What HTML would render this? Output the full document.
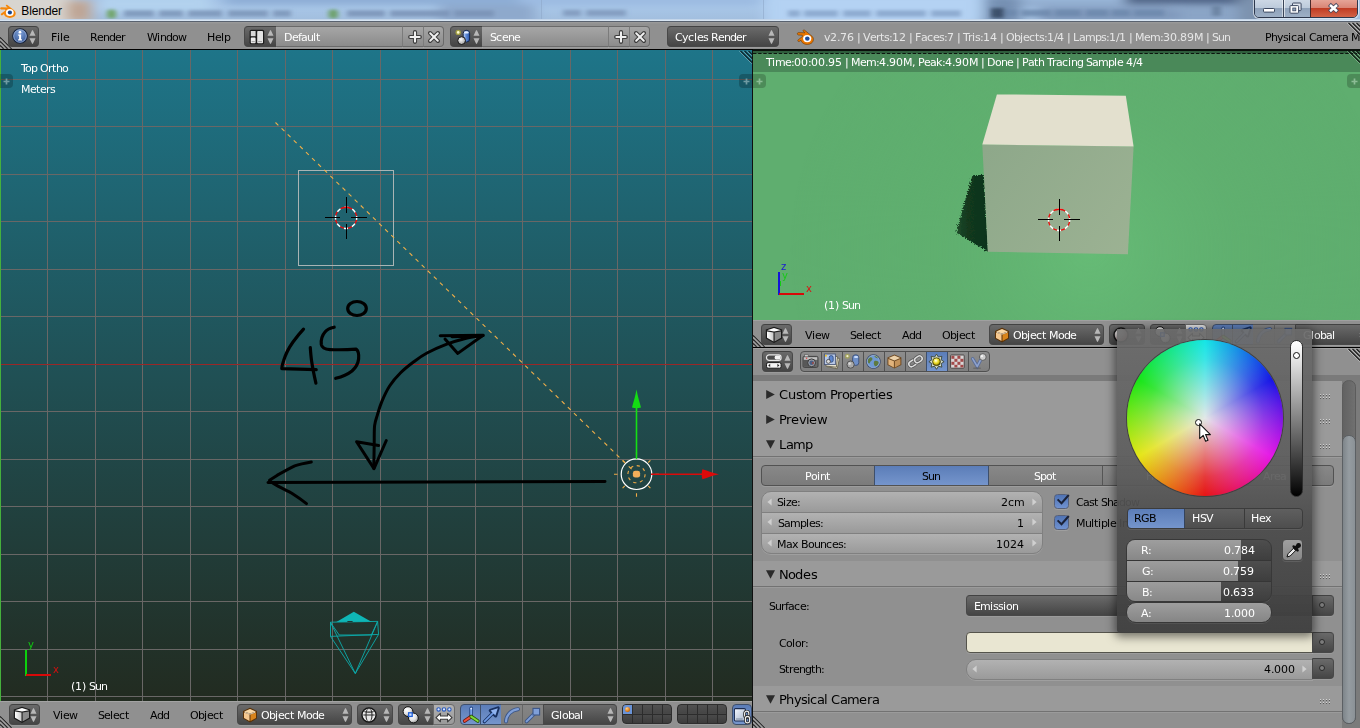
<!DOCTYPE html>
<html lang="en"><head><meta charset="utf-8"><title>Blender</title>
<style>
html,body{margin:0;padding:0;background:#909090;}
body{width:1360px;height:728px;overflow:hidden;position:relative;font-family:"DejaVu Sans","Liberation Sans",sans-serif;font-size:11px;}
#app{position:absolute;left:0;top:0;width:1360px;height:728px;overflow:hidden;}
#app div,#app svg{position:absolute;box-sizing:border-box;}
#app svg{overflow:visible;}
.t{white-space:pre;will-change:transform;}
#app svg.t{overflow:visible;pointer-events:none;}
#app svg text{white-space:pre;}
.clip{overflow:hidden;}

.dk{background:linear-gradient(#6a6a6a,#454545);border:1px solid #484848;border-top-color:#424242;border-radius:4px;box-shadow:0 1px 0 rgba(255,255,255,.1);}
.lt{background:linear-gradient(#a6a6a6,#8b8b8b);border:1px solid #6a6a6a;box-shadow:0 1px 0 rgba(255,255,255,.12);}
.num{background:linear-gradient(#b2b2b2,#9a9a9a);border:1px solid #808080;box-shadow:0 1px 0 rgba(255,255,255,.14);}
.sel{background:linear-gradient(#5b7db8,#7595cc);border:1px solid #3e4f6b;}

</style></head><body><div id="app">
<svg style="left:0px;top:0px;" width="1360" height="20" viewBox="0 0 1360 20"><defs><linearGradient id="tb0" x1="0" y1="0" x2="0" y2="1"><stop offset="0" stop-color="#a3c2e6"/><stop offset=".3" stop-color="#a9c7e8"/><stop offset="1" stop-color="#a2bede"/></linearGradient><filter id="tbb" x="-10%" y="-100%" width="120%" height="300%"><feGaussianBlur stdDeviation="7 3"/></filter><filter id="tbs" x="-10%" y="-100%" width="120%" height="300%"><feGaussianBlur stdDeviation="2.4 1.7"/></filter><clipPath id="tbc"><rect x="0" y="0" width="1360" height="20"/></clipPath></defs><g clip-path="url(#tbc)"><rect x="0" y="0" width="1360" height="20" fill="url(#tb0)"/><g filter="url(#tbb)"><rect x="-20" y="-6" width="92" height="34" fill="#d8d5d0"/><rect x="66" y="0" width="26" height="22" fill="#c4ae9f"/><rect x="70" y="4" width="18" height="14" fill="#bda392"/><rect x="100" y="-4" width="110" height="16" fill="#b2d2ee"/><rect x="225" y="-8" width="300" height="13" fill="#8eaed6"/><rect x="520" y="-6" width="240" height="12" fill="#9dbce2"/><rect x="765" y="-6" width="215" height="34" fill="#b4d2f3"/><rect x="985" y="-4" width="36" height="30" fill="#7690b2"/><rect x="1020" y="-2" width="150" height="10" fill="#93aed0"/><rect x="1125" y="-9" width="135" height="14" fill="#52688a"/><rect x="1180" y="6" width="65" height="18" fill="#8aa4c6"/><rect x="1238" y="-4" width="30" height="30" fill="#7c92ae"/><rect x="440" y="5" width="95" height="18" fill="#8ea9cc"/><rect x="1040" y="8" width="140" height="14" fill="#8099bc"/></g><g filter="url(#tbs)"><path d="M124 13.5H310" stroke="#7a93b6" stroke-width="6.5" stroke-dasharray="30 5 24 5 34 6 40 5 18 60" opacity=".8"/><path d="M347 13.5H518" stroke="#7890b4" stroke-width="6.5" stroke-dasharray="38 5 60 4 40 40" opacity=".8"/><path d="M563 13H637" stroke="#7d97bb" stroke-width="6.5" stroke-dasharray="18 5 40 30" opacity=".8"/><path d="M788 13.5H980" stroke="#86a3c8" stroke-width="6.5" stroke-dasharray="12 4 34 5 28 5 50 5 30 40" opacity=".8"/><path d="M1003 13H1182" stroke="#6c87ac" stroke-width="6.5" stroke-dasharray="14 4 30 4 26 5 22 4 18 4 30 40" opacity=".8"/><rect x="107" y="9.5" width="9" height="9" rx="3" fill="#72a66c"/><rect x="328.5" y="9.5" width="9.5" height="9" rx="3" fill="#6ea26e"/><rect x="991" y="8" width="13" height="10" fill="#34465f" opacity=".85"/><rect x="1212" y="6" width="9" height="10" fill="#5f7696" opacity=".7"/></g><path d="M541.5 0V20M763.5 0V20" stroke="#8fa9ca" stroke-width="1" opacity=".6"/></g></svg>
<div style="left:0px;top:19px;width:1360px;height:2px;background:linear-gradient(#b9cde4,#e2edf8);"></div>
<div style="left:0px;top:21px;width:1360px;height:1px;background:#59626f;"></div>
<div style="left:1254px;top:-4px;width:104px;height:22px;border-radius:5px;border:1px solid #2c374c;background:#8fa2ba;overflow:hidden;box-shadow:0 0 0 1px rgba(255,255,255,.55);"><div style="left:0;top:0;width:28px;height:11px;background:linear-gradient(#d3dde9,#bccadb);"></div><div style="left:0;top:11px;width:28px;height:10px;background:linear-gradient(#8ea1b9,#9fb1c7);"></div><div style="left:28px;top:0;width:27px;height:11px;background:linear-gradient(#d3dde9,#bccadb);"></div><div style="left:28px;top:11px;width:27px;height:10px;background:linear-gradient(#8ea1b9,#9fb1c7);"></div><div style="left:55px;top:0;width:48px;height:11px;background:linear-gradient(#eab0a4,#d98474);"></div><div style="left:55px;top:11px;width:48px;height:10px;background:linear-gradient(#bf3a22,#d4674c);"></div><div style="left:27.5px;top:0;width:1px;height:22px;background:#3a4558;"></div><div style="left:54.5px;top:0;width:1px;height:22px;background:#4a2a2a;"></div><div style="left:28.5px;top:0;width:1px;height:22px;background:rgba(255,255,255,.6);"></div><div style="left:26.5px;top:0;width:1px;height:22px;background:rgba(255,255,255,.5);"></div></div>
<svg style="left:1254px;top:0px;" width="104" height="18" viewBox="0 0 104 18"><rect x="9.5" y="8.5" width="11" height="3.6" rx="0.8" fill="#fff" stroke="#3c4860" stroke-width="1"/><rect x="38.5" y="3" width="8.6" height="7.6" rx="0.8" fill="#dfe5ee" stroke="#3c4860" stroke-width="1"/><rect x="36" y="5.6" width="8.6" height="7.6" rx="0.8" fill="#fff" stroke="#3c4860" stroke-width="1"/><rect x="38.8" y="8" width="3" height="2.8" fill="#8fa2ba" stroke="#3c4860" stroke-width=".8"/><path d="M75.4 4.4L83.6 11.8M83.6 4.4L75.4 11.8" stroke="#4a4a5e" stroke-width="4.2" stroke-linecap="butt"/><path d="M76 5L83 11.2M83 5L76 11.2" stroke="#fff" stroke-width="2.5" stroke-linecap="butt"/></svg>
<svg style="left:0px;top:4px;" width="17" height="14" viewBox="0 0 17 14"><path d="M1 3.2L7.6 3.4L6 2C5.4 1.2 6.4 0.2 7.4 1L14.4 6.6C16.4 8.6 15.8 11.4 13.8 12.8C11.6 14.3 8.2 14.3 6 12.8C4.8 12 4.2 11 4 10L2.4 11.2C1.2 11.8 0.2 10.6 1.2 9.6L5.4 6.6L5 5.6L1.2 5.4C-0.2 5.2 -0.2 3.4 1 3.2Z" fill="#f5870a"/><ellipse cx="9.8" cy="8.6" rx="3.9" ry="3.5" fill="#fff"/><ellipse cx="9.9" cy="8.6" rx="2.1" ry="2" fill="#17468f"/></svg>
<div style="left:21.3px;top:4px;white-space:pre;font-family:'Liberation Sans','DejaVu Sans',sans-serif;font-size:12px;line-height:14px;color:#000;letter-spacing:-0.1px;">Blender</div>
<div style="left:0px;top:22px;width:1360px;height:27px;background:#909090;"></div>
<div style="left:0px;top:49px;width:1360px;height:1px;background:#000;"></div>
<div style="left:0px;top:50px;width:752px;height:651px;background:linear-gradient(#1e7589,#222b20);"></div>
<div style="left:0px;top:701px;width:752px;height:27px;background:#909090;"></div>
<div style="left:752px;top:50px;width:1px;height:678px;background:#101010;"></div>
<div style="left:753px;top:50px;width:607px;height:270px;background:#5fae6f;"></div>
<div style="left:753px;top:53px;width:607px;height:19px;background:#4a8858;"></div>
<div style="left:753px;top:320px;width:607px;height:27px;background:#909090;"></div>
<div style="left:753px;top:347px;width:607px;height:1px;background:#000;"></div>
<div style="left:753px;top:348px;width:607px;height:27px;background:#909090;"></div>
<div style="left:753px;top:375px;width:607px;height:6px;background:#7a7a7a;"></div>
<div style="left:753px;top:381px;width:607px;height:347px;background:#999;"></div>
<svg style="left:0;top:0" width="752" height="701" viewBox="0 0 752 701"><defs><clipPath id="lv"><rect x="0" y="50" width="752" height="651"/></clipPath></defs><g clip-path="url(#lv)"><path d="M47.5 50V701 M95.5 50V701 M142.5 50V701 M190.5 50V701 M237.5 50V701 M285.5 50V701 M332.5 50V701 M380.5 50V701 M427.5 50V701 M475.5 50V701 M522.5 50V701 M570.5 50V701 M617.5 50V701 M665.5 50V701 M712.5 50V701 M0 79.5H752 M0 126.5H752 M0 174.5H752 M0 221.5H752 M0 269.5H752 M0 316.5H752 M0 411.5H752 M0 459.5H752 M0 506.5H752 M0 554.5H752 M0 601.5H752 M0 649.5H752 M0 696.5H752" stroke="#696766" stroke-width="1" fill="none" shape-rendering="crispEdges"/><path d="M0 364.5H752" stroke="#9a2727" stroke-width="1" shape-rendering="crispEdges"/><path d="M0.5 50V701" stroke="#45b03c" stroke-width="1" shape-rendering="crispEdges"/><rect x="298.5" y="170.5" width="95" height="95" fill="none" stroke="#a9b4b4" stroke-width="1" shape-rendering="crispEdges"/><path d="M275.5 122.5L636.5 474" stroke="#f0ae48" stroke-width="1.1" stroke-dasharray="4 4.5" fill="none"/><circle cx="346.1" cy="217.8" r="10.6" fill="none" stroke="#f40808" stroke-width="1.3" stroke-dasharray="4.163 4.163" stroke-dashoffset="6.244"/><circle cx="346.1" cy="217.8" r="10.6" fill="none" stroke="#fff" stroke-width="1.45" stroke-dasharray="4.163 4.163" stroke-dashoffset="2.081"/><path d="M349.73 207.84A10.6 10.6 0 0 0 342.47 207.84" fill="none" stroke="#f40808" stroke-width="1.5"/><path d="M325.0 217.5H340.0M351.0 217.5H367.0M346.5 197.0V213.0M346.5 224.0V239.0" stroke="#000" stroke-width="1" shape-rendering="crispEdges"/><path d="M303.5 329.2C300 333 296 338 293 342C288 349 285 356 283.5 361C282.5 364 281.8 367 281.8 368.6L316.2 369.6" stroke="#000" stroke-width="3.2" fill="none" stroke-linecap="round" stroke-linejoin="round"/><path d="M310.3 347.7C310.6 352 311 357 311.6 361C312.6 368 314.5 377 315.9 383.1" stroke="#000" stroke-width="3.2" fill="none" stroke-linecap="round" stroke-linejoin="round"/><path d="M334.2 327.2C330 328 327 329.5 325 332C322 335.5 320.8 340 321.3 344.5C322 348 325 349.3 330 349.6C340 350 350 349.6 356.3 349.2C358.5 351 359 355 358.6 359C358 364 355.5 368 352 371C347 375 341 377 335.7 378.3" stroke="#000" stroke-width="3.2" fill="none" stroke-linecap="round" stroke-linejoin="round"/><ellipse cx="357" cy="308.5" rx="9.3" ry="7" stroke="#000" stroke-width="3.2" fill="none"/><path d="M483.1 335.4C480.0 335.9 470.4 337.2 464.4 338.7C458.3 340.2 453.0 341.8 446.8 344.2C440.6 346.6 432.5 350.1 427.0 353.0C421.5 355.9 418.2 358.5 413.8 361.8C409.4 365.1 404.6 368.8 400.6 372.8C396.6 376.8 392.7 381.2 389.6 386.0C386.5 390.8 383.9 396.6 381.9 401.4C379.9 406.2 378.7 410.6 377.5 414.6C376.3 418.6 375.2 420.8 374.6 425.6C374.1 430.4 374.3 436.1 374.2 443.2C374.1 450.3 373.9 464.2 373.8 468.4" stroke="#000" stroke-width="3" fill="none" stroke-linecap="round" stroke-linejoin="round"/><path d="M440.2 335.8L483.1 335.2L457.8 353.4L445 339" stroke="#000" stroke-width="3" fill="none" stroke-linecap="round" stroke-linejoin="round"/><path d="M452 336.8L481 335.9" stroke="#000" stroke-width="3" fill="none" stroke-linecap="round" stroke-linejoin="round"/><path d="M356.6 441.8L378.6 445.4M386.3 440.5L374 468.6L356.6 441.8" stroke="#000" stroke-width="3" fill="none" stroke-linecap="round" stroke-linejoin="round"/><path d="M268 482.5L605 481.6" stroke="#000" stroke-width="3" fill="none" stroke-linecap="round" stroke-linejoin="round"/><path d="M311.3 461.9C305 463 300 464 294.7 465.8C288 469 282 472.5 277 475.4L269.5 480.2" stroke="#000" stroke-width="3" fill="none" stroke-linecap="round" stroke-linejoin="round"/><path d="M270.4 481.4C273 483.5 276 485 278.5 486.4C283 489 288 491 291.8 493.2C297 496.5 302 500 306.5 503.6" stroke="#000" stroke-width="3" fill="none" stroke-linecap="round" stroke-linejoin="round"/><circle cx="636.5" cy="474.2" r="15.3" fill="none" stroke="#fff" stroke-width="1.2"/><circle cx="636.5" cy="474.2" r="8.6" fill="none" stroke="#f0aa46" stroke-width="1.1" stroke-dasharray="3.2 3.55"/><rect x="632.9" y="470.8" width="7.2" height="6.8" rx="2.4" fill="#f2ae5a"/><path d="M655.5 474.2L659.0 474.2 M648.2 485.9L650.4 488.1 M636.5 493.2L636.5 496.7 M624.8 485.9L622.6 488.1 M617.5 474.2L614.0 474.2 M624.8 462.5L622.6 460.3 M636.5 455.2L636.5 451.7 M648.2 462.5L650.4 460.3" stroke="#f0aa46" stroke-width="1.1" fill="none"/><path d="M636.5 459V406" stroke="#14e014" stroke-width="1.6" fill="none"/><path d="M636.5 389.5C637.6 396 639.6 402 641 407.6C638 408.6 635 408.6 632 407.6C633.4 402 635.4 396 636.5 389.5Z" fill="#14dc14"/><path d="M651 474.3H704" stroke="#dc0a0a" stroke-width="1.6" fill="none"/><path d="M719 474.3C713 473.2 708 470.8 702.4 469.3C701.4 472.5 701.4 476 702.4 479.3C708 477.8 713 475.4 719 474.3Z" fill="#dc0a0a"/><path d="M353.8 611.8L371.8 622H336.4Z" fill="#0fb6b6"/><path d="M330.5 622.2L377.6 621.4L378.6 634.4L330.5 636.4ZM339.2 635H371.3M330.5 622.5L355.3 673.5L377.6 621.6M330.5 636.4L355.3 673.5L378.6 634.4M371.3 635L377.6 621.6M339.2 635L330.5 622.5" stroke="#0cabab" stroke-width="0.9" fill="none"/><path d="M347.4 621.5H352.6" stroke="#1c3a35" stroke-width="1"/><path d="M26 650V676" stroke="#0cd00c" stroke-width="2" shape-rendering="crispEdges"/><path d="M26 675H51.2" stroke="#d80808" stroke-width="2" shape-rendering="crispEdges"/></g></svg>
<svg class="t" style="left:18px;top:60px" width="55" height="16"><text x="3 7 13 19 22 30 34 38 44" y="12" font-size="11" fill="#fff">Top Ortho</text></svg>
<svg class="t" style="left:18px;top:81px" width="42" height="16"><text x="3 12 18 22 28 32" y="12" font-size="11" fill="#fff">Meters</text></svg>
<svg class="t" style="left:68px;top:678px" width="44" height="16"><text x="3 7 14 18 21 27 33" y="12" font-size="11" fill="#fff">(1) Sun</text></svg>
<svg class="t" style="left:25px;top:638px" width="13" height="15"><text x="3" y="10" font-size="10" fill="#10c810">y</text></svg>
<svg class="t" style="left:50px;top:663px" width="13" height="15"><text x="3" y="10" font-size="10" fill="#d01010">x</text></svg>
<div style="left:0px;top:22px;width:1360px;height:2px;background:linear-gradient(#9c9c9c,#909090);"></div>
<svg style="left:0px;top:37px;" width="12" height="12" viewBox="0 0 12 12"><path d="M0 0.5L11.5 12M0 4.5L7.5 12M0 8.5L3.5 12" stroke="#1a1a1a" stroke-width="1.15"/><path d="M0.2 1.7L10.3 11.8M0.2 5.7L6.3 11.8M0.2 9.7L2.3 11.8" stroke="#dcdcdc" stroke-width="0.8" opacity=".75"/></svg>
<div class="dk" style="left:8px;top:26px;width:31px;height:21px;border-radius:4px;"></div>
<svg style="left:12px;top:28px;" width="16" height="16" viewBox="0 0 16 16"><defs><radialGradient id="gi" cx="50%" cy="30%" r="75%"><stop offset="0" stop-color="#7da0d8"/><stop offset="1" stop-color="#2d4f8f"/></radialGradient></defs><circle cx="8" cy="8" r="7.3" fill="url(#gi)" stroke="#16233d" stroke-width="1.1"/><circle cx="8" cy="8" r="6.3" fill="none" stroke="#c7d6ee" stroke-width="0.7" opacity=".8"/><circle cx="8" cy="4.2" r="1.35" fill="#fff"/><path d="M6.2 6.6H9.1V11.2H10V12.4H6.1V11.2H7.1V7.8H6.2Z" fill="#fff"/></svg>
<svg style="left:28.9px;top:29.5px;" width="7" height="14" viewBox="0 0 7 14"><path d="M3.1 0.2H3.9L6.5 5.7H0.5ZM3.1 13.8H3.9L6.5 8.3H0.5Z" fill="#b8b8b8"/></svg>
<svg class="t" style="left:48px;top:29px" width="26" height="16"><text x="3 9 12 15" y="12" font-size="11" fill="#000">File</text></svg>
<svg class="t" style="left:87px;top:29px" width="43" height="16"><text x="3 10 16 22 28 34" y="12" font-size="11" fill="#000">Render</text></svg>
<svg class="t" style="left:144px;top:29px" width="48" height="16"><text x="3 13 16 22 28 34" y="12" font-size="11" fill="#000">Window</text></svg>
<svg class="t" style="left:204px;top:29px" width="31" height="16"><text x="3 11 17 20" y="12" font-size="11" fill="#000">Help</text></svg>
<div class="dk" style="left:244px;top:26px;width:33px;height:21px;border-radius:4px 0 0 4px;"></div>
<svg style="left:249px;top:28.5px;" width="16" height="16" viewBox="0 0 16 16"><rect x="0.6" y="0.8" width="14.6" height="14.4" rx="1.6" fill="#1c1c1c"/><rect x="1.8" y="2" width="4.8" height="5.2" fill="#d8d8d8"/><rect x="1.8" y="8.6" width="4.8" height="5.6" rx="0.8" fill="#ededed"/><rect x="8.2" y="2" width="5.8" height="12.2" rx="0.8" fill="#e4e4e4"/><path d="M2.6 12.6H5.8M9.2 12.6H13" stroke="#8a8a8a" stroke-width="0.8"/></svg>
<svg style="left:267.0px;top:29.5px;" width="7" height="14" viewBox="0 0 7 14"><path d="M3.1 0.2H3.9L6.5 5.7H0.5ZM3.1 13.8H3.9L6.5 8.3H0.5Z" fill="#b8b8b8"/></svg>
<div class="lt" style="left:276px;top:26px;width:127px;height:21px;border-radius:0;border-left:0;"></div>
<svg class="t" style="left:281px;top:29px" width="44" height="16"><text x="3 11 17 20 26 32 35" y="12" font-size="11" fill="#fff">Default</text></svg>
<div class="lt" style="left:402px;top:26px;width:22px;height:21px;border-radius:0;border-left-color:#7b7b7b;"></div>
<div class="lt" style="left:423px;top:26px;width:21px;height:21px;border-radius:0 4px 4px 0;border-left-color:#7b7b7b;"></div>
<svg style="left:407.5px;top:29.5px;" width="14" height="14" viewBox="0 0 14 14"><path d="M7 2.2V11.8M2.2 7H11.8" stroke="#3c3c3c" stroke-width="4.2" stroke-linecap="round"/><path d="M7 2.4V11.6M2.4 7H11.6" stroke="#f0f0f0" stroke-width="2.1" stroke-linecap="round"/></svg>
<svg style="left:426.5px;top:29.5px;" width="14" height="14" viewBox="0 0 14 14"><path d="M3 3L11 11M11 3L3 11" stroke="#3c3c3c" stroke-width="4" stroke-linecap="round"/><path d="M3.2 3.2L10.8 10.8M10.8 3.2L3.2 10.8" stroke="#f0f0f0" stroke-width="2" stroke-linecap="round"/></svg>
<div class="dk" style="left:450px;top:26px;width:33px;height:21px;border-radius:4px 0 0 4px;"></div>
<svg style="left:455px;top:28.5px;" width="16" height="16" viewBox="0 0 16 16"><defs><radialGradient id="gs" cx="40%" cy="35%" r="70%"><stop offset="0" stop-color="#fff"/><stop offset="1" stop-color="#9a9a9a"/></radialGradient><linearGradient id="gc" x1="0" x2="1"><stop offset="0" stop-color="#cfe0ff"/><stop offset=".45" stop-color="#5d8ad8"/><stop offset="1" stop-color="#2c57a8"/></linearGradient></defs><circle cx="3.2" cy="3.4" r="2.7" fill="#b8b43a" opacity=".75"/><circle cx="3.2" cy="3.4" r="1.3" fill="#fffbd0"/><rect x="8.2" y="1.4" width="6.4" height="11.6" rx="3" fill="url(#gc)" stroke="#14284f" stroke-width="1"/><ellipse cx="11.4" cy="3.4" rx="2.4" ry="1.2" fill="#e4eeff"/><circle cx="6.6" cy="11.6" r="3.9" fill="url(#gs)" stroke="#141414" stroke-width="1"/></svg>
<svg style="left:473.0px;top:29.5px;" width="7" height="14" viewBox="0 0 7 14"><path d="M3.1 0.2H3.9L6.5 5.7H0.5ZM3.1 13.8H3.9L6.5 8.3H0.5Z" fill="#b8b8b8"/></svg>
<div class="lt" style="left:482px;top:26px;width:127px;height:21px;border-radius:0;border-left:0;"></div>
<svg class="t" style="left:487px;top:29px" width="38" height="16"><text x="3 9 15 21 27" y="12" font-size="11" fill="#fff">Scene</text></svg>
<div class="lt" style="left:608px;top:26px;width:22px;height:21px;border-radius:0;border-left-color:#7b7b7b;"></div>
<div class="lt" style="left:629px;top:26px;width:21px;height:21px;border-radius:0 4px 4px 0;border-left-color:#7b7b7b;"></div>
<svg style="left:613.5px;top:29.5px;" width="14" height="14" viewBox="0 0 14 14"><path d="M7 2.2V11.8M2.2 7H11.8" stroke="#3c3c3c" stroke-width="4.2" stroke-linecap="round"/><path d="M7 2.4V11.6M2.4 7H11.6" stroke="#f0f0f0" stroke-width="2.1" stroke-linecap="round"/></svg>
<svg style="left:632.5px;top:29.5px;" width="14" height="14" viewBox="0 0 14 14"><path d="M3 3L11 11M11 3L3 11" stroke="#3c3c3c" stroke-width="4" stroke-linecap="round"/><path d="M3.2 3.2L10.8 10.8M10.8 3.2L3.2 10.8" stroke="#f0f0f0" stroke-width="2" stroke-linecap="round"/></svg>
<div class="dk" style="left:667px;top:26px;width:112px;height:21px;border-radius:4px;"></div>
<svg class="t" style="left:672px;top:29px" width="79" height="16"><text x="3 10 16 22 25 31 36 39 46 52 58 64 70" y="12" font-size="11" fill="#fff">Cycles Render</text></svg>
<svg style="left:768.0px;top:29.5px;" width="7" height="14" viewBox="0 0 7 14"><path d="M3.1 0.2H3.9L6.5 5.7H0.5ZM3.1 13.8H3.9L6.5 8.3H0.5Z" fill="#b8b8b8"/></svg>
<svg style="left:797px;top:28.5px;" width="18" height="16" viewBox="0 0 18 16"><path d="M1.2 3.6L8 3.8L6.2 2.2C5.6 1.4 6.6 0.4 7.6 1.2L15 7.2C17.2 9.4 16.6 12.6 14.4 14.2C12 15.9 8.4 15.9 6 14.2C4.8 13.3 4.2 12.2 4 11.2L2.4 12.4C1.2 13 0.2 11.8 1.2 10.8L5.6 7.4L5.2 6.2L1.4 6C0 5.8 0 3.8 1.2 3.6Z" fill="#ea7600" stroke="#6b3a05" stroke-width="0.6"/><ellipse cx="10.2" cy="9.6" rx="4.1" ry="3.7" fill="#fff"/><ellipse cx="10.3" cy="9.6" rx="2.3" ry="2.2" fill="#1a4b9b"/></svg>
<svg class="t" style="left:821px;top:29px" width="414" height="16"><text x="3 9 16 19 26 33 36 39 42 49 55 59 63 68 71 78 85 88 91 94 100 106 112 118 123 126 133 136 139 142 147 151 154 159 162 169 176 179 182 185 193 199 202 208 214 218 223 226 233 236 243 246 249 252 258 264 274 280 285 288 295 298 305 308 311 314 323 329 339 342 349 356 359 366 373 382 385 388 391 397 403" y="12" font-size="11" fill="#e6e6e6">v2.76 | Verts:12 | Faces:7 | Tris:14 | Objects:1/4 | Lamps:1/1 | Mem:30.89M | Sun</text></svg>
<svg class="t" style="left:1262px;top:29px" width="103" height="16"><text x="3 9 15 21 26 29 35 41 44 47 54 60 70 76 80 86 89" y="12" font-size="11" fill="#000">Physical Camera M</text></svg>
<svg style="left:1346px;top:22.5px;" width="14" height="14" viewBox="0 0 14 14"><path d="M2.5 0L14 11.5M6.5 0L14 7.5M10.5 0L14 3.5" stroke="#1a1a1a" stroke-width="1.15"/><path d="M1.3 0.2L13.8 12.7M5.3 0.2L13.8 8.7M9.3 0.2L13.8 4.7" stroke="#dcdcdc" stroke-width="0.8" opacity=".75"/></svg>
<div style="left:0px;top:701px;width:752px;height:1px;background:#a3a3a3;"></div>
<div class="clip" style="left:0px;top:701px;width:752px;height:27px;">
<svg style="left:0px;top:15px;" width="12" height="12" viewBox="0 0 12 12"><path d="M0 0.5L11.5 12M0 4.5L7.5 12M0 8.5L3.5 12" stroke="#1a1a1a" stroke-width="1.15"/><path d="M0.2 1.7L10.3 11.8M0.2 5.7L6.3 11.8M0.2 9.7L2.3 11.8" stroke="#dcdcdc" stroke-width="0.8" opacity=".75"/></svg>
<div class="dk" style="left:9px;top:3px;width:31px;height:21px;border-radius:4px;"></div>
<svg style="left:12.5px;top:4.5px;" width="18" height="18" viewBox="0 0 18 18"><defs><linearGradient id="v1" x1="0" x2="1"><stop offset="0" stop-color="#fff"/><stop offset="1" stop-color="#c8c8c8"/></linearGradient></defs><path d="M0.8 3.4L9 0.8L17.2 3.4V12.4L9 17L0.8 12.4Z" fill="#1b1b1b"/><path d="M2 4.3L9 2L16 4.3L9 5.6Z" fill="#fdfdfd"/><path d="M2 5.4L8.5 6.6V15.4L2 11.8Z" fill="url(#v1)"/><path d="M9.6 6.6L16 5.4V11.8L9.6 15.4Z" fill="#8a8a8a"/></svg>
<svg style="left:29.9px;top:6.5px;" width="7" height="14" viewBox="0 0 7 14"><path d="M3.1 0.2H3.9L6.5 5.7H0.5ZM3.1 13.8H3.9L6.5 8.3H0.5Z" fill="#b8b8b8"/></svg>
<svg class="t" style="left:50px;top:6px" width="33" height="16"><text x="3 10 13 19" y="12" font-size="11" fill="#000">View</text></svg>
<svg class="t" style="left:95px;top:6px" width="39" height="16"><text x="3 9 15 18 24 30" y="12" font-size="11" fill="#000">Select</text></svg>
<svg class="t" style="left:147px;top:6px" width="27" height="16"><text x="3 10 16" y="12" font-size="11" fill="#000">Add</text></svg>
<svg class="t" style="left:187px;top:6px" width="41" height="16"><text x="3 11 17 20 26 32" y="12" font-size="11" fill="#000">Object</text></svg>
<div class="dk" style="left:237px;top:3px;width:115px;height:21px;border-radius:4px;"></div>
<svg style="left:242px;top:5.5px;" width="16" height="16" viewBox="0 0 16 16"><path d="M1 4L8 0.8L15 4V11.6L8 15.4L1 11.6Z" fill="#5a3208"/><path d="M2.2 4.4L8 2L13.8 4.4L8 6.6Z" fill="#fbd9a6"/><path d="M2 5.4L7.5 7.5V14L2 11Z" fill="#f6c890"/><path d="M8.5 7.5L14 5.4V11L8.5 14Z" fill="#d8841c"/><path d="M2.6 5.2L8 7.2L13.4 5.2" stroke="#fff3dc" stroke-width="0.8" fill="none"/></svg>
<svg class="t" style="left:258px;top:6px" width="71" height="16"><text x="3 11 17 20 26 32 36 39 48 54 60" y="12" font-size="11" fill="#fff">Object Mode</text></svg>
<svg style="left:341.8px;top:6.5px;" width="7" height="14" viewBox="0 0 7 14"><path d="M3.1 0.2H3.9L6.5 5.7H0.5ZM3.1 13.8H3.9L6.5 8.3H0.5Z" fill="#b8b8b8"/></svg>
<div class="dk" style="left:357px;top:3px;width:36px;height:21px;border-radius:4px;"></div>
<svg style="left:361px;top:5.5px;" width="16" height="16" viewBox="0 0 16 16"><circle cx="8" cy="8" r="7" fill="#e6e6e6" stroke="#151515" stroke-width="1.5"/><ellipse cx="8" cy="8" rx="3" ry="6.6" fill="none" stroke="#2a2a2a" stroke-width="1.1"/><path d="M1.2 8H14.8M2.6 4.2C5 5.4 11 5.4 13.4 4.2" stroke="#2a2a2a" stroke-width="1.1" fill="none"/><circle cx="8" cy="8" r="5.9" fill="none" stroke="#fff" stroke-width="0.7" opacity=".6"/></svg>
<svg style="left:382.8px;top:6.5px;" width="7" height="14" viewBox="0 0 7 14"><path d="M3.1 0.2H3.9L6.5 5.7H0.5ZM3.1 13.8H3.9L6.5 8.3H0.5Z" fill="#b8b8b8"/></svg>
<div class="dk" style="left:398px;top:3px;width:36px;height:21px;border-radius:4px 0 0 4px;"></div>
<svg style="left:401.5px;top:4.5px;" width="18" height="18" viewBox="0 0 18 18"><defs><radialGradient id="pv" cx="38%" cy="32%" r="75%"><stop offset="0" stop-color="#fff"/><stop offset=".55" stop-color="#e2e2e2"/><stop offset="1" stop-color="#8a8a8a"/></radialGradient></defs><circle cx="6" cy="5.6" r="4.9" fill="url(#pv)" stroke="#111" stroke-width="1"/><circle cx="11.4" cy="12" r="4.9" fill="url(#pv)" stroke="#111" stroke-width="1"/><rect x="6.6" y="6.8" width="3.6" height="3.6" fill="#cfe0ff" stroke="#1f5fd8" stroke-width="1.3"/></svg>
<svg style="left:424.0px;top:6.5px;" width="7" height="14" viewBox="0 0 7 14"><path d="M3.1 0.2H3.9L6.5 5.7H0.5ZM3.1 13.8H3.9L6.5 8.3H0.5Z" fill="#b8b8b8"/></svg>
<div class="lt" style="left:433px;top:3px;width:22px;height:21px;border-radius:0 4px 4px 0;background:linear-gradient(#b1b1b1,#999);"></div>
<svg style="left:435px;top:4.5px;" width="18" height="18" viewBox="0 0 18 18"><g fill="#dfe9ff" stroke="#2a5bbd" stroke-width="1.1"><circle cx="3.6" cy="3.4" r="1.7"/><circle cx="9" cy="3.4" r="1.7"/><circle cx="14.4" cy="3.4" r="1.7"/></g><path d="M1 11.6L5.4 7.4V10H12.6V7.4L17 11.6L12.6 15.8V13.2H5.4V15.8Z" fill="#fff" stroke="#3a3a3a" stroke-width="1.1" stroke-linejoin="round"/></svg>
<div class="sel" style="left:460px;top:3px;width:21px;height:21px;border-radius:4px 0 0 4px;"></div>
<div class="sel" style="left:480px;top:3px;width:22px;height:21px;border-radius:0;"></div>
<div style="left:501px;top:3px;width:22px;height:21px;background:linear-gradient(#858585,#7c7c7c);border:1px solid #5a5a5a;border-left:0;"></div>
<div style="left:522px;top:3px;width:22px;height:21px;background:linear-gradient(#858585,#7c7c7c);border:1px solid #5a5a5a;border-left-color:#666;"></div>
<svg style="left:461.5px;top:4.5px;" width="18" height="18" viewBox="0 0 18 18"><path d="M9.2 10.4V2.4" stroke="#1d3c7a" stroke-width="3.6" stroke-linecap="round"/><path d="M9.2 10.4V2.4" stroke="#7aa4ec" stroke-width="2" stroke-linecap="round"/><path d="M9.2 10.6L2.6 15" stroke="#6e1a12" stroke-width="3.6" stroke-linecap="round"/><path d="M9.2 10.6L2.6 15" stroke="#f0503c" stroke-width="2" stroke-linecap="round"/><path d="M9.2 10.6L15.8 15" stroke="#2a5a0c" stroke-width="3.6" stroke-linecap="round"/><path d="M9.2 10.6L15.8 15" stroke="#7fd83a" stroke-width="2" stroke-linecap="round"/><circle cx="9.2" cy="2.6" r="0.9" fill="#e8f0ff"/></svg>
<svg style="left:482px;top:4.5px;" width="18" height="18" viewBox="0 0 18 18"><path d="M2.4 15.6L11 7L8.4 4.6L16 2L13.6 9.8L11.6 7.8" fill="none" stroke="#18305f" stroke-width="3.4" stroke-linejoin="round" stroke-linecap="round"/><path d="M2.6 15.4L11.4 6.6" stroke="#6f9be6" stroke-width="1.8" stroke-linecap="round"/><path d="M8.6 4.6L15.8 2.2L13.4 9.4Z" fill="#8fb3f0"/></svg>
<svg style="left:503px;top:4.5px;" width="18" height="18" viewBox="0 0 18 18"><path d="M3 15.4C3.4 9 8 4 15 3.2" fill="none" stroke="#3d5788" stroke-width="4" stroke-linecap="round"/><path d="M3 15.4C3.4 9 8 4 15 3.2" fill="none" stroke="#7f9fd8" stroke-width="2.2" stroke-linecap="round"/></svg>
<svg style="left:524px;top:4.5px;" width="18" height="18" viewBox="0 0 18 18"><path d="M2.6 15.4L10 8" fill="none" stroke="#3d5788" stroke-width="3.8" stroke-linecap="round"/><path d="M2.6 15.4L10 8" fill="none" stroke="#7f9fd8" stroke-width="2" stroke-linecap="round"/><rect x="9" y="2.4" width="6.6" height="6.6" fill="#7f9fd8" stroke="#3d5788" stroke-width="1.1"/></svg>
<div class="dk" style="left:543px;top:3px;width:74px;height:21px;border-radius:0 4px 4px 0;"></div>
<svg class="t" style="left:548px;top:6px" width="40" height="16"><text x="3 11 14 20 26 32" y="12" font-size="11" fill="#fff">Global</text></svg>
<svg style="left:606.9px;top:6.5px;" width="7" height="14" viewBox="0 0 7 14"><path d="M3.1 0.2H3.9L6.5 5.7H0.5ZM3.1 13.8H3.9L6.5 8.3H0.5Z" fill="#b8b8b8"/></svg>
<div style="left:621.5px;top:3px;width:50px;height:20px;border-radius:4px;background:linear-gradient(#515151,#454545 46%,#4c4c4c 50%,#3c3c3c);border:1px solid #2e2e2e;box-shadow:0 1px 0 rgba(255,255,255,.12);overflow:hidden;"><div style="left:9px;top:0;width:1px;height:20px;background:#2c2c2c"></div><div style="left:19px;top:0;width:1px;height:20px;background:#2c2c2c"></div><div style="left:29px;top:0;width:1px;height:20px;background:#2c2c2c"></div><div style="left:39px;top:0;width:1px;height:20px;background:#2c2c2c"></div><div style="left:0;top:8.5px;width:50px;height:1px;background:#2c2c2c"></div><div style="left:0;top:0;width:9px;height:8.5px;background:#6a93d6"></div><div style="left:2px;top:1.6px;width:5.2px;height:5.2px;border-radius:50%;background:radial-gradient(circle at 35% 30%,#ffd08a,#e07a10 60%,#8a4a08)"></div></div>
<div style="left:676.5px;top:3px;width:50px;height:20px;border-radius:4px;background:linear-gradient(#515151,#454545 46%,#4c4c4c 50%,#3c3c3c);border:1px solid #2e2e2e;box-shadow:0 1px 0 rgba(255,255,255,.12);overflow:hidden;"><div style="left:9px;top:0;width:1px;height:20px;background:#2c2c2c"></div><div style="left:19px;top:0;width:1px;height:20px;background:#2c2c2c"></div><div style="left:29px;top:0;width:1px;height:20px;background:#2c2c2c"></div><div style="left:39px;top:0;width:1px;height:20px;background:#2c2c2c"></div><div style="left:0;top:8.5px;width:50px;height:1px;background:#2c2c2c"></div></div>
<div class="sel" style="left:732px;top:3.3px;width:20px;height:20.5px;border-radius:4px;"></div>
<svg style="left:733.4px;top:5px;" width="19" height="18" viewBox="0 0 19 18"><defs><linearGradient id="lk" x1="0" y1="0" x2="1" y2="1"><stop offset="0" stop-color="#f4f8ff"/><stop offset="1" stop-color="#a8b6cc"/></linearGradient></defs><rect x="1.4" y="2.6" width="11" height="12.4" rx="1" fill="url(#lk)" stroke="#1c2d52" stroke-width="1.1"/><path d="M3 13H9.6" stroke="#6a7890" stroke-width="0.8"/><rect x="11.6" y="5.2" width="4.2" height="6.4" rx="2.1" fill="none" stroke="#1d1d1d" stroke-width="2.6"/><rect x="11.6" y="5.2" width="4.2" height="6.4" rx="2.1" fill="none" stroke="#ececec" stroke-width="1.2"/><rect x="12.4" y="10.4" width="4.2" height="6.4" rx="2.1" fill="none" stroke="#1d1d1d" stroke-width="2.6"/><rect x="12.4" y="10.4" width="4.2" height="6.4" rx="2.1" fill="none" stroke="#ececec" stroke-width="1.2"/></svg>
</div>
<div style="left:753px;top:49px;width:607px;height:2px;background:#0a0f0b;"></div>
<div style="left:753px;top:51px;width:607px;height:2px;background:#2f5d3c;"></div>
<div style="left:753px;top:53px;width:607px;height:1px;background:#417a50;"></div>
<svg style="left:753px;top:53px;" width="607" height="1" viewBox="0 0 607 1"><path d="M0 0.5H607" stroke="#0c140e" stroke-width="1" stroke-dasharray="3.4 1.75"/></svg>
<div style="left:753px;top:54px;width:607px;height:18px;background:#4a8959;"></div>
<svg class="t" style="left:763px;top:54px" width="385" height="16"><text x="3 9 12 22 28 31 38 45 48 55 62 65 72 79 82 85 88 97 103 113 116 123 126 133 140 149 152 155 161 167 173 179 182 189 192 199 206 215 218 221 224 232 238 244 250 253 256 259 265 271 275 281 284 289 293 299 305 308 314 320 323 329 335 345 351 354 360 363 370 373" y="12" font-size="11" fill="#fff">Time:00:00.95 | Mem:4.90M, Peak:4.90M | Done | Path Tracing Sample 4/4</text></svg>
<svg style="left:0;top:0" width="1360" height="320" viewBox="0 0 1360 320"><defs><radialGradient id="gl" cx="1090" cy="250" r="300" gradientUnits="userSpaceOnUse"><stop offset="0" stop-color="#66bb76"/><stop offset="0.5" stop-color="#60b06f" stop-opacity=".6"/><stop offset="1" stop-color="#5fae6f" stop-opacity="0"/></radialGradient><linearGradient id="cf" x1="985" y1="150" x2="1130" y2="255" gradientUnits="userSpaceOnUse"><stop offset="0" stop-color="#8ea88a"/><stop offset="1" stop-color="#9cb293"/></linearGradient><linearGradient id="sh" x1="957" y1="0" x2="988" y2="0" gradientUnits="userSpaceOnUse"><stop offset="0" stop-color="#1e4a2a"/><stop offset=".35" stop-color="#12381e"/><stop offset="1" stop-color="#0f331b"/></linearGradient><filter id="b1" x="-20%" y="-20%" width="140%" height="140%"><feTurbulence type="fractalNoise" baseFrequency="0.85" numOctaves="2" seed="7" result="n"/><feDisplacementMap in="SourceGraphic" in2="n" scale="5" xChannelSelector="R" yChannelSelector="G" result="d"/><feGaussianBlur in="d" stdDeviation="0.55"/></filter><filter id="b2" x="-5%" y="-5%" width="110%" height="110%"><feTurbulence type="fractalNoise" baseFrequency="0.9" numOctaves="1" seed="3" result="n"/><feDisplacementMap in="SourceGraphic" in2="n" scale="1.6" xChannelSelector="R" yChannelSelector="G"/></filter></defs><rect x="753" y="72" width="607" height="248" fill="url(#gl)"/><path d="M972.6 175L984 175L988 251.8L956 232.6Z" fill="url(#sh)" filter="url(#b1)"/><path d="M982.3 144.5L1133.6 146.5L1127.9 254.3L987.8 251.7Z" fill="url(#cf)" filter="url(#b2)"/><path d="M996.9 94.4L1125.8 95.7L1133.6 146.5L982.3 144.5Z" fill="#e3e0ce" filter="url(#b2)"/><circle cx="1059.1" cy="219.8" r="10.6" fill="none" stroke="#f40808" stroke-width="1.3" stroke-dasharray="4.163 4.163" stroke-dashoffset="6.244"/><circle cx="1059.1" cy="219.8" r="10.6" fill="none" stroke="#fff" stroke-width="1.45" stroke-dasharray="4.163 4.163" stroke-dashoffset="2.081"/><path d="M1062.73 209.84A10.6 10.6 0 0 0 1055.47 209.84" fill="none" stroke="#f40808" stroke-width="1.5"/><path d="M1038.0 219.5H1053.0M1064.0 219.5H1080.0M1059.5 199.0V215.0M1059.5 226.0V241.0" stroke="#000" stroke-width="1" shape-rendering="crispEdges"/><path d="M779 272V295" stroke="#1414d8" stroke-width="2" shape-rendering="crispEdges"/><path d="M779 294H804" stroke="#d80808" stroke-width="2" shape-rendering="crispEdges"/><path d="M780.5 281V286" stroke="#10d010" stroke-width="1"/></svg>
<svg class="t" style="left:778px;top:260px" width="13" height="15"><text x="3" y="10" font-size="10" fill="#1a1ad0">z</text></svg>
<svg class="t" style="left:779px;top:269px" width="13" height="15"><text x="3" y="10" font-size="10" fill="#18c818">y</text></svg>
<svg class="t" style="left:803px;top:282px" width="13" height="15"><text x="3" y="10" font-size="10" fill="#d81414">x</text></svg>
<svg class="t" style="left:821px;top:297px" width="44" height="16"><text x="3 7 14 18 21 27 33" y="12" font-size="11" fill="#fff">(1) Sun</text></svg>
<div style="left:753px;top:74px;width:13px;height:14px;background:rgba(0,0,0,.2);border-radius:0 4px 4px 0;"></div>
<svg style="left:756px;top:78px;" width="7" height="7" viewBox="0 0 7 7"><path d="M3.5 0.5V6.5M0.5 3.5H6.5" stroke="#8cbc95" stroke-width="1.7"/></svg>
<div style="left:1347px;top:74px;width:13px;height:14px;background:rgba(0,0,0,.2);border-radius:4px 0 0 4px;"></div>
<svg style="left:1350.5px;top:78px;" width="7" height="7" viewBox="0 0 7 7"><path d="M3.5 0.5V6.5M0.5 3.5H6.5" stroke="#8cbc95" stroke-width="1.7"/></svg>
<div style="left:0px;top:74px;width:13px;height:14px;background:rgba(0,0,0,.22);border-radius:0 4px 4px 0;"></div>
<svg style="left:3px;top:78px;" width="7" height="7" viewBox="0 0 7 7"><path d="M3.5 0.5V6.5M0.5 3.5H6.5" stroke="#6f9ba3" stroke-width="1.7"/></svg>
<div style="left:739px;top:74px;width:13px;height:14px;background:rgba(0,0,0,.22);border-radius:4px 0 0 4px;"></div>
<svg style="left:742.5px;top:78px;" width="7" height="7" viewBox="0 0 7 7"><path d="M3.5 0.5V6.5M0.5 3.5H6.5" stroke="#6f9ba3" stroke-width="1.7"/></svg>
<svg style="left:1346px;top:50.5px;" width="14" height="14" viewBox="0 0 14 14"><path d="M2.5 0L14 11.5M6.5 0L14 7.5M10.5 0L14 3.5" stroke="#0c1a10" stroke-width="1.15"/><path d="M1.3 0.2L13.8 12.7M5.3 0.2L13.8 8.7M9.3 0.2L13.8 4.7" stroke="#9fcfa9" stroke-width="0.8" opacity=".8"/></svg>
<svg style="left:738px;top:50.5px;" width="14" height="14" viewBox="0 0 14 14"><path d="M2.5 0L14 11.5M6.5 0L14 7.5M10.5 0L14 3.5" stroke="#0a2228" stroke-width="1.15"/><path d="M1.3 0.2L13.8 12.7M5.3 0.2L13.8 8.7M9.3 0.2L13.8 4.7" stroke="#8cc4d2" stroke-width="0.8" opacity=".8"/></svg>
<div style="left:753px;top:320px;width:607px;height:1px;background:#a0a0a0;"></div>
<div class="clip" style="left:752px;top:321px;width:608px;height:27px;">
<div class="dk" style="left:9px;top:3px;width:31px;height:21px;border-radius:4px;"></div>
<svg style="left:12.5px;top:4.5px;" width="18" height="18" viewBox="0 0 18 18"><defs><linearGradient id="v1" x1="0" x2="1"><stop offset="0" stop-color="#fff"/><stop offset="1" stop-color="#c8c8c8"/></linearGradient></defs><path d="M0.8 3.4L9 0.8L17.2 3.4V12.4L9 17L0.8 12.4Z" fill="#1b1b1b"/><path d="M2 4.3L9 2L16 4.3L9 5.6Z" fill="#fdfdfd"/><path d="M2 5.4L8.5 6.6V15.4L2 11.8Z" fill="url(#v1)"/><path d="M9.6 6.6L16 5.4V11.8L9.6 15.4Z" fill="#8a8a8a"/></svg>
<svg style="left:29.9px;top:6.5px;" width="7" height="14" viewBox="0 0 7 14"><path d="M3.1 0.2H3.9L6.5 5.7H0.5ZM3.1 13.8H3.9L6.5 8.3H0.5Z" fill="#b8b8b8"/></svg>
<svg class="t" style="left:50px;top:6px" width="33" height="16"><text x="3 10 13 19" y="12" font-size="11" fill="#000">View</text></svg>
<svg class="t" style="left:95px;top:6px" width="39" height="16"><text x="3 9 15 18 24 30" y="12" font-size="11" fill="#000">Select</text></svg>
<svg class="t" style="left:147px;top:6px" width="27" height="16"><text x="3 10 16" y="12" font-size="11" fill="#000">Add</text></svg>
<svg class="t" style="left:187px;top:6px" width="41" height="16"><text x="3 11 17 20 26 32" y="12" font-size="11" fill="#000">Object</text></svg>
<div class="dk" style="left:237px;top:3px;width:115px;height:21px;border-radius:4px;"></div>
<svg style="left:242px;top:5.5px;" width="16" height="16" viewBox="0 0 16 16"><path d="M1 4L8 0.8L15 4V11.6L8 15.4L1 11.6Z" fill="#5a3208"/><path d="M2.2 4.4L8 2L13.8 4.4L8 6.6Z" fill="#fbd9a6"/><path d="M2 5.4L7.5 7.5V14L2 11Z" fill="#f6c890"/><path d="M8.5 7.5L14 5.4V11L8.5 14Z" fill="#d8841c"/><path d="M2.6 5.2L8 7.2L13.4 5.2" stroke="#fff3dc" stroke-width="0.8" fill="none"/></svg>
<svg class="t" style="left:258px;top:6px" width="71" height="16"><text x="3 11 17 20 26 32 36 39 48 54 60" y="12" font-size="11" fill="#fff">Object Mode</text></svg>
<svg style="left:341.8px;top:6.5px;" width="7" height="14" viewBox="0 0 7 14"><path d="M3.1 0.2H3.9L6.5 5.7H0.5ZM3.1 13.8H3.9L6.5 8.3H0.5Z" fill="#b8b8b8"/></svg>
<div class="dk" style="left:357px;top:3px;width:36px;height:21px;border-radius:4px;"></div>
<svg style="left:361px;top:5.5px;" width="16" height="16" viewBox="0 0 16 16"><defs><radialGradient id="sr" cx="30%" cy="30%" r="80%"><stop offset="0" stop-color="#fff"/><stop offset=".45" stop-color="#d8cccc"/><stop offset="1" stop-color="#8a5a5a"/></radialGradient></defs><circle cx="8" cy="8" r="7" fill="url(#sr)" stroke="#151515" stroke-width="1.5"/></svg>
<svg style="left:382.8px;top:6.5px;" width="7" height="14" viewBox="0 0 7 14"><path d="M3.1 0.2H3.9L6.5 5.7H0.5ZM3.1 13.8H3.9L6.5 8.3H0.5Z" fill="#b8b8b8"/></svg>
<div class="dk" style="left:398px;top:3px;width:36px;height:21px;border-radius:4px 0 0 4px;"></div>
<svg style="left:401.5px;top:4.5px;" width="18" height="18" viewBox="0 0 18 18"><defs><radialGradient id="pv" cx="38%" cy="32%" r="75%"><stop offset="0" stop-color="#fff"/><stop offset=".55" stop-color="#e2e2e2"/><stop offset="1" stop-color="#8a8a8a"/></radialGradient></defs><circle cx="6" cy="5.6" r="4.9" fill="url(#pv)" stroke="#111" stroke-width="1"/><circle cx="11.4" cy="12" r="4.9" fill="url(#pv)" stroke="#111" stroke-width="1"/><rect x="6.6" y="6.8" width="3.6" height="3.6" fill="#cfe0ff" stroke="#1f5fd8" stroke-width="1.3"/></svg>
<svg style="left:424.0px;top:6.5px;" width="7" height="14" viewBox="0 0 7 14"><path d="M3.1 0.2H3.9L6.5 5.7H0.5ZM3.1 13.8H3.9L6.5 8.3H0.5Z" fill="#b8b8b8"/></svg>
<div class="lt" style="left:433px;top:3px;width:22px;height:21px;border-radius:0 4px 4px 0;background:linear-gradient(#e2e2e2,#c4c4c4);"></div>
<svg style="left:435px;top:4.5px;" width="18" height="18" viewBox="0 0 18 18"><g fill="#dfe9ff" stroke="#2a5bbd" stroke-width="1.1"><circle cx="3.6" cy="3.4" r="1.7"/><circle cx="9" cy="3.4" r="1.7"/><circle cx="14.4" cy="3.4" r="1.7"/></g><path d="M1 11.6L5.4 7.4V10H12.6V7.4L17 11.6L12.6 15.8V13.2H5.4V15.8Z" fill="#fff" stroke="#3a3a3a" stroke-width="1.1" stroke-linejoin="round"/></svg>
<div class="sel" style="left:460px;top:3px;width:21px;height:21px;border-radius:4px 0 0 4px;"></div>
<div class="sel" style="left:480px;top:3px;width:22px;height:21px;border-radius:0;"></div>
<div style="left:501px;top:3px;width:22px;height:21px;background:linear-gradient(#858585,#7c7c7c);border:1px solid #5a5a5a;border-left:0;"></div>
<div style="left:522px;top:3px;width:22px;height:21px;background:linear-gradient(#858585,#7c7c7c);border:1px solid #5a5a5a;border-left-color:#666;"></div>
<svg style="left:461.5px;top:4.5px;" width="18" height="18" viewBox="0 0 18 18"><path d="M9.2 10.4V2.4" stroke="#1d3c7a" stroke-width="3.6" stroke-linecap="round"/><path d="M9.2 10.4V2.4" stroke="#7aa4ec" stroke-width="2" stroke-linecap="round"/><path d="M9.2 10.6L2.6 15" stroke="#6e1a12" stroke-width="3.6" stroke-linecap="round"/><path d="M9.2 10.6L2.6 15" stroke="#f0503c" stroke-width="2" stroke-linecap="round"/><path d="M9.2 10.6L15.8 15" stroke="#2a5a0c" stroke-width="3.6" stroke-linecap="round"/><path d="M9.2 10.6L15.8 15" stroke="#7fd83a" stroke-width="2" stroke-linecap="round"/><circle cx="9.2" cy="2.6" r="0.9" fill="#e8f0ff"/></svg>
<svg style="left:482px;top:4.5px;" width="18" height="18" viewBox="0 0 18 18"><path d="M2.4 15.6L11 7L8.4 4.6L16 2L13.6 9.8L11.6 7.8" fill="none" stroke="#18305f" stroke-width="3.4" stroke-linejoin="round" stroke-linecap="round"/><path d="M2.6 15.4L11.4 6.6" stroke="#6f9be6" stroke-width="1.8" stroke-linecap="round"/><path d="M8.6 4.6L15.8 2.2L13.4 9.4Z" fill="#8fb3f0"/></svg>
<svg style="left:503px;top:4.5px;" width="18" height="18" viewBox="0 0 18 18"><path d="M3 15.4C3.4 9 8 4 15 3.2" fill="none" stroke="#3d5788" stroke-width="4" stroke-linecap="round"/><path d="M3 15.4C3.4 9 8 4 15 3.2" fill="none" stroke="#7f9fd8" stroke-width="2.2" stroke-linecap="round"/></svg>
<svg style="left:524px;top:4.5px;" width="18" height="18" viewBox="0 0 18 18"><path d="M2.6 15.4L10 8" fill="none" stroke="#3d5788" stroke-width="3.8" stroke-linecap="round"/><path d="M2.6 15.4L10 8" fill="none" stroke="#7f9fd8" stroke-width="2" stroke-linecap="round"/><rect x="9" y="2.4" width="6.6" height="6.6" fill="#7f9fd8" stroke="#3d5788" stroke-width="1.1"/></svg>
<div class="dk" style="left:543px;top:3px;width:74px;height:21px;border-radius:0 4px 4px 0;"></div>
<svg class="t" style="left:548px;top:6px" width="40" height="16"><text x="3 11 14 20 26 32" y="12" font-size="11" fill="#fff">Global</text></svg>
<svg style="left:606.9px;top:6.5px;" width="7" height="14" viewBox="0 0 7 14"><path d="M3.1 0.2H3.9L6.5 5.7H0.5ZM3.1 13.8H3.9L6.5 8.3H0.5Z" fill="#b8b8b8"/></svg>
<div style="left:621.5px;top:3px;width:50px;height:20px;border-radius:4px;background:linear-gradient(#515151,#454545 46%,#4c4c4c 50%,#3c3c3c);border:1px solid #2e2e2e;box-shadow:0 1px 0 rgba(255,255,255,.12);overflow:hidden;"><div style="left:9px;top:0;width:1px;height:20px;background:#2c2c2c"></div><div style="left:19px;top:0;width:1px;height:20px;background:#2c2c2c"></div><div style="left:29px;top:0;width:1px;height:20px;background:#2c2c2c"></div><div style="left:39px;top:0;width:1px;height:20px;background:#2c2c2c"></div><div style="left:0;top:8.5px;width:50px;height:1px;background:#2c2c2c"></div><div style="left:0;top:0;width:9px;height:8.5px;background:#6a93d6"></div><div style="left:2px;top:1.6px;width:5.2px;height:5.2px;border-radius:50%;background:radial-gradient(circle at 35% 30%,#ffd08a,#e07a10 60%,#8a4a08)"></div></div>
<div style="left:676.5px;top:3px;width:50px;height:20px;border-radius:4px;background:linear-gradient(#515151,#454545 46%,#4c4c4c 50%,#3c3c3c);border:1px solid #2e2e2e;box-shadow:0 1px 0 rgba(255,255,255,.12);overflow:hidden;"><div style="left:9px;top:0;width:1px;height:20px;background:#2c2c2c"></div><div style="left:19px;top:0;width:1px;height:20px;background:#2c2c2c"></div><div style="left:29px;top:0;width:1px;height:20px;background:#2c2c2c"></div><div style="left:39px;top:0;width:1px;height:20px;background:#2c2c2c"></div><div style="left:0;top:8.5px;width:50px;height:1px;background:#2c2c2c"></div></div>
<div class="sel" style="left:732px;top:3.3px;width:20px;height:20.5px;border-radius:4px;"></div>
<svg style="left:733.4px;top:5px;" width="19" height="18" viewBox="0 0 19 18"><defs><linearGradient id="lk" x1="0" y1="0" x2="1" y2="1"><stop offset="0" stop-color="#f4f8ff"/><stop offset="1" stop-color="#a8b6cc"/></linearGradient></defs><rect x="1.4" y="2.6" width="11" height="12.4" rx="1" fill="url(#lk)" stroke="#1c2d52" stroke-width="1.1"/><path d="M3 13H9.6" stroke="#6a7890" stroke-width="0.8"/><rect x="11.6" y="5.2" width="4.2" height="6.4" rx="2.1" fill="none" stroke="#1d1d1d" stroke-width="2.6"/><rect x="11.6" y="5.2" width="4.2" height="6.4" rx="2.1" fill="none" stroke="#ececec" stroke-width="1.2"/><rect x="12.4" y="10.4" width="4.2" height="6.4" rx="2.1" fill="none" stroke="#1d1d1d" stroke-width="2.6"/><rect x="12.4" y="10.4" width="4.2" height="6.4" rx="2.1" fill="none" stroke="#ececec" stroke-width="1.2"/></svg>
</div>
<svg style="left:753px;top:335px;" width="12" height="12" viewBox="0 0 12 12"><path d="M0 0.5L11.5 12M0 4.5L7.5 12M0 8.5L3.5 12" stroke="#1a1a1a" stroke-width="1.15"/><path d="M0.2 1.7L10.3 11.8M0.2 5.7L6.3 11.8M0.2 9.7L2.3 11.8" stroke="#dcdcdc" stroke-width="0.8" opacity=".75"/></svg>
<div style="left:753px;top:348px;width:607px;height:1px;background:#a0a0a0;"></div>
<div class="dk" style="left:762px;top:351px;width:31px;height:21px;border-radius:4px;"></div>
<svg style="left:766px;top:354px;" width="17" height="15" viewBox="0 0 17 15"><rect x="0.5" y="0.8" width="14.6" height="5.6" rx="2.6" fill="#4a4a4a" stroke="#e8e8e8" stroke-width="1.2"/><rect x="8.6" y="1.6" width="5.8" height="4" rx="1.8" fill="#f4f4f4"/><rect x="0.5" y="8.6" width="14.6" height="5.6" rx="1.6" fill="#f4f4f4" stroke="#1a1a1a" stroke-width="1"/><path d="M2.2 11.4L4.2 9.8V13ZM13.4 11.4L11.4 9.8V13Z" fill="#222"/></svg>
<svg style="left:783.5px;top:354.5px;" width="7" height="14" viewBox="0 0 7 14"><path d="M3.1 0.2H3.9L6.5 5.7H0.5ZM3.1 13.8H3.9L6.5 8.3H0.5Z" fill="#b8b8b8"/></svg>
<div style="left:800px;top:351px;width:190px;height:21px;border-radius:4px;background:linear-gradient(#8d8d8d,#7f7f7f);border:1px solid #505050;box-shadow:0 1px 0 rgba(255,255,255,.12);overflow:hidden;"><div style="left:20px;top:0;width:1px;height:21px;background:#525252"></div><div style="left:41px;top:0;width:1px;height:21px;background:#525252"></div><div style="left:62px;top:0;width:1px;height:21px;background:#525252"></div><div style="left:83px;top:0;width:1px;height:21px;background:#525252"></div><div style="left:104px;top:0;width:1px;height:21px;background:#525252"></div><div style="left:125px;top:0;width:1px;height:21px;background:#525252"></div><div style="left:146px;top:0;width:1px;height:21px;background:#525252"></div><div style="left:167px;top:0;width:1px;height:21px;background:#525252"></div><div style="left:125px;top:-1px;width:22px;height:21px;background:linear-gradient(#5b7db8,#7595cc);border:1px solid #3e4f6b;"></div></div>
<svg style="left:801.5px;top:352.5px;" width="17" height="17" viewBox="0 0 17 17"><rect x="1" y="3.4" width="15" height="11" rx="1.4" fill="#6a6a6a" stroke="#444" stroke-width="1"/><rect x="1.8" y="4.2" width="13.4" height="2.6" fill="#c4c4c4"/><rect x="2.6" y="1.8" width="3.6" height="2" fill="#d8d8d8" stroke="#555" stroke-width=".6"/><rect x="1.8" y="7" width="5" height="6.6" fill="#585858"/><circle cx="9.6" cy="9.8" r="3.9" fill="#9a9fa8" stroke="#3a3a3a" stroke-width="1"/><circle cx="9.6" cy="9.8" r="2.2" fill="#4a5f86"/><path d="M9.6 9.8L11.6 8.6A2.2 2.2 0 0 1 11 11.6Z" fill="#9a4a44"/><circle cx="4.6" cy="5.2" r="0.8" fill="#e04848"/></svg>
<svg style="left:822.5px;top:352.5px;" width="17" height="17" viewBox="0 0 17 17"><rect x="5" y="4.2" width="10.6" height="10.6" fill="#e8e2c8" stroke="#6a6654" stroke-width=".9" transform="rotate(12 10 9)"/><rect x="3.4" y="3" width="10.6" height="10.6" fill="#efead4" stroke="#6a6654" stroke-width=".9" transform="rotate(6 8 8)"/><rect x="1.4" y="1" width="11" height="10.6" fill="#b9c9e6" stroke="#4a5878" stroke-width=".9"/><rect x="6.2" y="2.6" width="4" height="6.6" rx="1.8" fill="#5d86cf" stroke="#233a66" stroke-width=".7"/><circle cx="5.4" cy="8.4" r="2" fill="#ddd" stroke="#333" stroke-width=".7"/><rect x="2" y="1.8" width="1.8" height="1.8" fill="#f0c020"/></svg>
<svg style="left:843.5px;top:352.5px;" width="17" height="17" viewBox="0 0 17 17"><circle cx="3.4" cy="3.2" r="2.5" fill="#a8a850" opacity=".75"/><circle cx="3.4" cy="3.2" r="1.1" fill="#f4f0d0"/><rect x="8.6" y="1.8" width="6.2" height="10.6" rx="2.8" fill="#6f90c8" stroke="#3a4e78" stroke-width=".9"/><ellipse cx="12.1" cy="4" rx="2.2" ry="1.1" fill="#cfe0ff"/><circle cx="6.6" cy="11.6" r="3.6" fill="#a9a9a9" stroke="#4a4a4a" stroke-width=".9"/><circle cx="5.6" cy="10.6" r="1.3" fill="#e6e6e6" opacity=".8"/></svg>
<svg style="left:864.5px;top:352.5px;" width="17" height="17" viewBox="0 0 17 17"><circle cx="8.4" cy="8.6" r="6.8" fill="#6f99d2" stroke="#36476a" stroke-width="1.1"/><path d="M3.4 5.6C5 3.6 7.6 4.2 7.4 6.2C7.2 7.8 5.4 7.8 5 9.6C4.8 10.8 3.8 11 3 9.6C2.6 8 2.8 6.6 3.4 5.6ZM9.4 8C11 7.2 13.6 7.8 13.8 9.8C13.4 12 11.4 13.8 10 13.2C8.6 12 8.4 9.2 9.4 8ZM9 2.6C10.8 2.2 12.8 3.2 13.6 5C12.2 5.8 10 4.8 9 2.6Z" fill="#5f7a40"/><circle cx="8.4" cy="8.6" r="6.2" fill="none" stroke="#c7dcff" stroke-width=".7" opacity=".7"/></svg>
<svg style="left:885.5px;top:352.5px;" width="17" height="17" viewBox="0 0 17 17"><path d="M1.4 4.6L8.4 1.4L15.4 4.6V12L8.4 15.6L1.4 12Z" fill="#6e4a24"/><path d="M2.6 5L8.4 2.6L14.2 5L8.4 7.4Z" fill="#ecd2aa"/><path d="M2.4 6L7.9 8.2V14.4L2.4 11.6Z" fill="#e2b47c"/><path d="M8.9 8.2L14.4 6V11.6L8.9 14.4Z" fill="#c4935a"/></svg>
<svg style="left:906.5px;top:352.5px;" width="17" height="17" viewBox="0 0 17 17"><g fill="none" stroke-linecap="round"><rect x="1.6" y="7.6" width="8" height="5.4" rx="2.7" transform="rotate(-35 5.6 10.3)" stroke="#5a5a5a" stroke-width="3"/><rect x="1.6" y="7.6" width="8" height="5.4" rx="2.7" transform="rotate(-35 5.6 10.3)" stroke="#dcdcdc" stroke-width="1.5"/><rect x="7.4" y="3.6" width="8" height="5.4" rx="2.7" transform="rotate(-35 11.4 6.3)" stroke="#5a5a5a" stroke-width="3"/><rect x="7.4" y="3.6" width="8" height="5.4" rx="2.7" transform="rotate(-35 11.4 6.3)" stroke="#dcdcdc" stroke-width="1.5"/></g></svg>
<svg style="left:927.5px;top:352.5px;" width="17" height="17" viewBox="0 0 17 17"><defs><radialGradient id="sg" cx="42%" cy="36%" r="62%"><stop offset="0" stop-color="#ffffff"/><stop offset=".3" stop-color="#fcf26a"/><stop offset=".7" stop-color="#d8c410"/><stop offset="1" stop-color="#6a5e08"/></radialGradient></defs><path d="M8.5 1.1L10.4 4.1L13.9 3.3L13.1 6.8L16.1 8.7L13.1 10.6L13.9 14.1L10.4 13.3L8.5 16.3L6.6 13.3L3.1 14.1L3.9 10.6L0.9 8.7L3.9 6.8L3.1 3.3L6.6 4.1Z" fill="#d4dccc" stroke="#3a4436" stroke-width=".9" stroke-linejoin="round"/><circle cx="8.5" cy="8.7" r="3.9" fill="url(#sg)" stroke="#3a3608" stroke-width=".8"/></svg>
<svg style="left:948.5px;top:352.5px;" width="17" height="17" viewBox="0 0 17 17"><rect x="1.6" y="2" width="13.6" height="13.2" rx="0.8" fill="#d9d6d6" stroke="#4a4444" stroke-width="1"/><g fill="#a24a4a"><rect x="2.4" y="2.8" width="3" height="3"/><rect x="8.4" y="2.8" width="3" height="3"/><rect x="5.4" y="5.8" width="3" height="3"/><rect x="11.4" y="5.8" width="3" height="3"/><rect x="2.4" y="8.8" width="3" height="3"/><rect x="8.4" y="8.8" width="3" height="3"/><rect x="5.4" y="11.8" width="3" height="2.6"/><rect x="11.4" y="11.8" width="3" height="2.6"/></g></svg>
<svg style="left:969.5px;top:352.5px;" width="17" height="17" viewBox="0 0 17 17"><path d="M2.6 5.6L7.2 13.4L11.6 5.2" fill="none" stroke="#596c98" stroke-width="3.2" stroke-linejoin="miter" stroke-linecap="round"/><path d="M2.6 5.6L7.2 13.4L11.6 5.2" fill="none" stroke="#8ea2cc" stroke-width="1.6" stroke-linejoin="miter" stroke-linecap="round"/><ellipse cx="7" cy="15.2" rx="4" ry="0.9" fill="#555" opacity=".5"/><circle cx="12.8" cy="4" r="3.4" fill="#cfcfcf" stroke="#555" stroke-width=".9"/><circle cx="11.9" cy="3.1" r="1.2" fill="#f4f4f4"/></svg>
<svg style="left:1346px;top:348.5px;" width="14" height="14" viewBox="0 0 14 14"><path d="M2.5 0L14 11.5M6.5 0L14 7.5M10.5 0L14 3.5" stroke="#1a1a1a" stroke-width="1.15"/><path d="M1.3 0.2L13.8 12.7M5.3 0.2L13.8 8.7M9.3 0.2L13.8 4.7" stroke="#dcdcdc" stroke-width="0.8" opacity=".75"/></svg>
<div style="left:753px;top:381px;width:607px;height:347px;background:#909090;"></div>
<div style="left:1342px;top:381px;width:18px;height:347px;background:#7b7b7b;"></div>
<div style="left:753px;top:381px;width:589px;height:76px;background:#9a9a9a;"></div>
<div style="left:753px;top:381px;width:589px;height:25px;background:#9a9a9a;"></div>
<svg style="left:766px;top:390px;" width="9" height="9" viewBox="0 0 9 9"><path d="M0.2 0L8.8 4.5L0.2 9Z" fill="#2b2b2b"/></svg>
<svg class="t" style="left:776px;top:385px" width="121" height="20"><text x="3 12 20 26 31 38 50 54 61 66 73 81 89 94 99 102 110" y="14" font-size="13" fill="#000">Custom Properties</text></svg>
<svg style="left:1320px;top:394px;" width="10" height="5" viewBox="0 0 10 5"><g fill="#d2d2d2"><rect x="0" y="0" width="1" height="1"/><rect x="3" y="0" width="1" height="1"/><rect x="6" y="0" width="1" height="1"/><rect x="9" y="0" width="1" height="1"/><rect x="0" y="3" width="1" height="1"/><rect x="3" y="3" width="1" height="1"/><rect x="6" y="3" width="1" height="1"/><rect x="9" y="3" width="1" height="1"/></g><g fill="#5c5c5c"><rect x="0" y="1" width="1" height="1"/><rect x="3" y="1" width="1" height="1"/><rect x="6" y="1" width="1" height="1"/><rect x="9" y="1" width="1" height="1"/><rect x="0" y="4" width="1" height="1"/><rect x="3" y="4" width="1" height="1"/><rect x="6" y="4" width="1" height="1"/><rect x="9" y="4" width="1" height="1"/></g></svg>
<div style="left:753px;top:406px;width:589px;height:25px;background:#9a9a9a;"></div>
<svg style="left:766px;top:415px;" width="9" height="9" viewBox="0 0 9 9"><path d="M0.2 0L8.8 4.5L0.2 9Z" fill="#2b2b2b"/></svg>
<svg class="t" style="left:776px;top:410px" width="56" height="20"><text x="3 10 15 23 30 33 41" y="14" font-size="13" fill="#000">Preview</text></svg>
<svg style="left:1320px;top:419px;" width="10" height="5" viewBox="0 0 10 5"><g fill="#d2d2d2"><rect x="0" y="0" width="1" height="1"/><rect x="3" y="0" width="1" height="1"/><rect x="6" y="0" width="1" height="1"/><rect x="9" y="0" width="1" height="1"/><rect x="0" y="3" width="1" height="1"/><rect x="3" y="3" width="1" height="1"/><rect x="6" y="3" width="1" height="1"/><rect x="9" y="3" width="1" height="1"/></g><g fill="#5c5c5c"><rect x="0" y="1" width="1" height="1"/><rect x="3" y="1" width="1" height="1"/><rect x="6" y="1" width="1" height="1"/><rect x="9" y="1" width="1" height="1"/><rect x="0" y="4" width="1" height="1"/><rect x="3" y="4" width="1" height="1"/><rect x="6" y="4" width="1" height="1"/><rect x="9" y="4" width="1" height="1"/></g></svg>
<div style="left:753px;top:431px;width:589px;height:25px;background:#9a9a9a;"></div>
<svg style="left:766px;top:440.4px;" width="9" height="9" viewBox="0 0 9 9"><path d="M0 0.3H9L4.5 8.8Z" fill="#2b2b2b"/></svg>
<div style="left:753px;top:456px;width:589px;height:1px;background:#727272;"></div>
<div style="left:753px;top:457px;width:589px;height:1px;background:#9b9b9b;"></div>
<svg class="t" style="left:776px;top:435px" width="42" height="20"><text x="3 10 17 29" y="14" font-size="13" fill="#000">Lamp</text></svg>
<svg style="left:1320px;top:444px;" width="10" height="5" viewBox="0 0 10 5"><g fill="#d2d2d2"><rect x="0" y="0" width="1" height="1"/><rect x="3" y="0" width="1" height="1"/><rect x="6" y="0" width="1" height="1"/><rect x="9" y="0" width="1" height="1"/><rect x="0" y="3" width="1" height="1"/><rect x="3" y="3" width="1" height="1"/><rect x="6" y="3" width="1" height="1"/><rect x="9" y="3" width="1" height="1"/></g><g fill="#5c5c5c"><rect x="0" y="1" width="1" height="1"/><rect x="3" y="1" width="1" height="1"/><rect x="6" y="1" width="1" height="1"/><rect x="9" y="1" width="1" height="1"/><rect x="0" y="4" width="1" height="1"/><rect x="3" y="4" width="1" height="1"/><rect x="6" y="4" width="1" height="1"/><rect x="9" y="4" width="1" height="1"/></g></svg>
<div style="left:761px;top:465px;width:572.5px;height:21px;border-radius:4px;background:linear-gradient(#888,#7b7b7b);border:1px solid #525252;box-shadow:0 1px 0 rgba(255,255,255,.12);overflow:hidden;"><div style="left:112.4px;top:0;width:1px;height:21px;background:#555"></div><div style="left:226.3px;top:0;width:1px;height:21px;background:#555"></div><div style="left:340.4px;top:0;width:1px;height:21px;background:#555"></div><div style="left:454.5px;top:0;width:1px;height:21px;background:#555"></div><div style="left:112.4px;top:-1px;width:114.9px;height:21px;background:linear-gradient(#5b7db8,#7595cc);border:1px solid #3e4f6b;"></div></div>
<svg class="t" style="left:802px;top:468px" width="33" height="16"><text x="3 9 15 18 24" y="12" font-size="11" fill="#fff">Point</text></svg>
<svg class="t" style="left:919px;top:468px" width="26" height="16"><text x="3 9 15" y="12" font-size="11" fill="#000">Sun</text></svg>
<svg class="t" style="left:1031px;top:468px" width="30" height="16"><text x="3 9 15 21" y="12" font-size="11" fill="#fff">Spot</text></svg>
<svg class="t" style="left:1143px;top:468px" width="35" height="16"><text x="3 11 17 27" y="12" font-size="11" fill="#fff">Hemi</text></svg>
<svg class="t" style="left:1260px;top:468px" width="31" height="16"><text x="3 10 14 20" y="12" font-size="11" fill="#fff">Area</text></svg>
<div class="num" style="left:761px;top:491px;width:282px;height:22px;border-radius:10px 10px 0 0;"></div>
<svg style="left:767.4px;top:497.5px;" width="5" height="8" viewBox="0 0 5 8"><path d="M4.6 0.4V7.6L0.4 4Z" fill="#d0d0d0"/></svg>
<svg style="left:1032px;top:497.5px;" width="5" height="8" viewBox="0 0 5 8"><path d="M0.4 0.4V7.6L4.6 4Z" fill="#d0d0d0"/></svg>
<svg class="t" style="left:774px;top:494px" width="31" height="16"><text x="3 9 12 17 23" y="12" font-size="11" fill="#000">Size:</text></svg>
<svg class="t" style="left:998px;top:494px" width="31" height="16"><text x="3 10 16" y="12" font-size="11" fill="#000">2cm</text></svg>
<div class="num" style="left:761px;top:511.5px;width:282px;height:22px;border-radius:0;"></div>
<svg style="left:767.4px;top:518.0px;" width="5" height="8" viewBox="0 0 5 8"><path d="M4.6 0.4V7.6L0.4 4Z" fill="#d0d0d0"/></svg>
<svg style="left:1032px;top:518.0px;" width="5" height="8" viewBox="0 0 5 8"><path d="M0.4 0.4V7.6L4.6 4Z" fill="#d0d0d0"/></svg>
<svg class="t" style="left:775px;top:515px" width="53" height="16"><text x="3 9 15 25 31 34 40 45" y="12" font-size="11" fill="#000">Samples:</text></svg>
<svg class="t" style="left:1014px;top:515px" width="15" height="16"><text x="3" y="12" font-size="11" fill="#000">1</text></svg>
<div class="num" style="left:761px;top:532.5px;width:282px;height:21.5px;border-radius:0 0 10px 10px;"></div>
<svg style="left:767.4px;top:539.3px;" width="5" height="8" viewBox="0 0 5 8"><path d="M4.6 0.4V7.6L0.4 4Z" fill="#d0d0d0"/></svg>
<svg style="left:1032px;top:539.3px;" width="5" height="8" viewBox="0 0 5 8"><path d="M0.4 0.4V7.6L4.6 4Z" fill="#d0d0d0"/></svg>
<svg class="t" style="left:774px;top:536px" width="77" height="16"><text x="3 12 18 24 27 34 40 46 52 58 64 69" y="12" font-size="11" fill="#000">Max Bounces:</text></svg>
<svg class="t" style="left:993px;top:536px" width="36" height="16"><text x="3 10 17 24" y="12" font-size="11" fill="#000">1024</text></svg>
<div style="left:1054px;top:494px;width:15px;height:15px;border-radius:3.5px;background:linear-gradient(#4f73b4,#7092d0);border:1px solid #56607a;box-shadow:0 1px 0 rgba(255,255,255,.14);"></div>
<svg style="left:1055px;top:491.5px;" width="17" height="17" viewBox="0 0 17 17"><path d="M2.6 7.4L6.5 11.2L13.8 3" fill="none" stroke="#1a2238" stroke-width="2" stroke-linejoin="miter"/></svg>
<svg class="t" style="left:1073px;top:494px" width="72" height="16"><text x="3 10 16 21 25 28 34 40 46 52 58" y="12" font-size="11" fill="#000">Cast Shadow</text></svg>
<div style="left:1054px;top:515px;width:15px;height:15px;border-radius:3.5px;background:linear-gradient(#4f73b4,#7092d0);border:1px solid #56607a;box-shadow:0 1px 0 rgba(255,255,255,.14);"></div>
<svg style="left:1055px;top:512.5px;" width="17" height="17" viewBox="0 0 17 17"><path d="M2.6 7.4L6.5 11.2L13.8 3" fill="none" stroke="#1a2238" stroke-width="2" stroke-linejoin="miter"/></svg>
<svg class="t" style="left:1073px;top:515px" width="108" height="16"><text x="3 12 18 21 25 28 34 37 43 46 49 59 65 71 75 79 85 91 97" y="12" font-size="11" fill="#000">Multiple Importance</text></svg>
<div style="left:753px;top:561px;width:589px;height:25px;background:#9a9a9a;"></div>
<svg style="left:766px;top:570.4px;" width="9" height="9" viewBox="0 0 9 9"><path d="M0 0.3H9L4.5 8.8Z" fill="#2b2b2b"/></svg>
<div style="left:753px;top:586px;width:589px;height:1px;background:#727272;"></div>
<div style="left:753px;top:587px;width:589px;height:1px;background:#9b9b9b;"></div>
<svg class="t" style="left:776px;top:565px" width="46" height="20"><text x="3 12 19 27 35" y="14" font-size="13" fill="#000">Nodes</text></svg>
<svg style="left:1320px;top:574px;" width="10" height="5" viewBox="0 0 10 5"><g fill="#d2d2d2"><rect x="0" y="0" width="1" height="1"/><rect x="3" y="0" width="1" height="1"/><rect x="6" y="0" width="1" height="1"/><rect x="9" y="0" width="1" height="1"/><rect x="0" y="3" width="1" height="1"/><rect x="3" y="3" width="1" height="1"/><rect x="6" y="3" width="1" height="1"/><rect x="9" y="3" width="1" height="1"/></g><g fill="#5c5c5c"><rect x="0" y="1" width="1" height="1"/><rect x="3" y="1" width="1" height="1"/><rect x="6" y="1" width="1" height="1"/><rect x="9" y="1" width="1" height="1"/><rect x="0" y="4" width="1" height="1"/><rect x="3" y="4" width="1" height="1"/><rect x="6" y="4" width="1" height="1"/><rect x="9" y="4" width="1" height="1"/></g></svg>
<svg class="t" style="left:766px;top:598px" width="48" height="16"><text x="3 9 15 19 22 28 34 40" y="12" font-size="11" fill="#000">Surface:</text></svg>
<div class="dk" style="left:966px;top:595px;width:347px;height:21px;border-radius:4px 0 0 4px;"></div>
<svg class="t" style="left:971px;top:598px" width="52" height="16"><text x="3 9 19 22 27 32 35 41" y="12" font-size="11" fill="#fff">Emission</text></svg>
<div class="dk" style="left:1312px;top:595px;width:22px;height:21px;border-radius:0 4px 4px 0;"></div>
<div style="left:1319.2px;top:601.8px;width:6px;height:6px;border-radius:50%;background:#7c7c7c;border:1.2px solid #2a2a2a;"></div>
<svg class="t" style="left:776px;top:635px" width="37" height="16"><text x="3 10 16 19 25 29" y="12" font-size="11" fill="#000">Color:</text></svg>
<div style="left:966px;top:632px;width:347px;height:21px;border-radius:4px 0 0 4px;background:#e9e6d2;border:1px solid #55544c;box-shadow:0 1px 0 rgba(255,255,255,.12);"></div>
<div class="dk" style="left:1312px;top:632px;width:22px;height:21px;border-radius:0 4px 4px 0;"></div>
<div style="left:1319.2px;top:638.8px;width:6px;height:6px;border-radius:50%;background:#7c7c7c;border:1.2px solid #2a2a2a;"></div>
<svg class="t" style="left:776px;top:661px" width="53" height="16"><text x="3 9 13 17 23 29 35 39 45" y="12" font-size="11" fill="#000">Strength:</text></svg>
<div class="num" style="left:966px;top:658.5px;width:347px;height:21px;border-radius:10px 0 0 10px;"></div>
<svg style="left:972.4px;top:664.5px;" width="5" height="8" viewBox="0 0 5 8"><path d="M4.6 0.4V7.6L0.4 4Z" fill="#d0d0d0"/></svg>
<svg style="left:1302px;top:664.5px;" width="5" height="8" viewBox="0 0 5 8"><path d="M0.4 0.4V7.6L4.6 4Z" fill="#d0d0d0"/></svg>
<svg class="t" style="left:1261px;top:661px" width="39" height="16"><text x="3 10 13 20 27" y="12" font-size="11" fill="#000">4.000</text></svg>
<div class="dk" style="left:1312px;top:658px;width:22px;height:21px;border-radius:0 4px 4px 0;"></div>
<div style="left:1319.2px;top:664.8px;width:6px;height:6px;border-radius:50%;background:#7c7c7c;border:1.2px solid #2a2a2a;"></div>
<div style="left:753px;top:686px;width:589px;height:25px;background:#9a9a9a;"></div>
<svg style="left:766px;top:695.4px;" width="9" height="9" viewBox="0 0 9 9"><path d="M0 0.3H9L4.5 8.8Z" fill="#2b2b2b"/></svg>
<div style="left:753px;top:711px;width:589px;height:1px;background:#727272;"></div>
<div style="left:753px;top:712px;width:589px;height:1px;background:#9b9b9b;"></div>
<svg class="t" style="left:776px;top:690px" width="108" height="20"><text x="3 10 18 25 31 34 41 48 51 55 64 71 83 91 96" y="14" font-size="13" fill="#000">Physical Camera</text></svg>
<svg style="left:1320px;top:699px;" width="10" height="5" viewBox="0 0 10 5"><g fill="#d2d2d2"><rect x="0" y="0" width="1" height="1"/><rect x="3" y="0" width="1" height="1"/><rect x="6" y="0" width="1" height="1"/><rect x="9" y="0" width="1" height="1"/><rect x="0" y="3" width="1" height="1"/><rect x="3" y="3" width="1" height="1"/><rect x="6" y="3" width="1" height="1"/><rect x="9" y="3" width="1" height="1"/></g><g fill="#5c5c5c"><rect x="0" y="1" width="1" height="1"/><rect x="3" y="1" width="1" height="1"/><rect x="6" y="1" width="1" height="1"/><rect x="9" y="1" width="1" height="1"/><rect x="0" y="4" width="1" height="1"/><rect x="3" y="4" width="1" height="1"/><rect x="6" y="4" width="1" height="1"/><rect x="9" y="4" width="1" height="1"/></g></svg>
<svg style="left:753px;top:716px;" width="12" height="12" viewBox="0 0 12 12"><path d="M0 0.5L11.5 12M0 4.5L7.5 12M0 8.5L3.5 12" stroke="#1a1a1a" stroke-width="1.15"/><path d="M0.2 1.7L10.3 11.8M0.2 5.7L6.3 11.8M0.2 9.7L2.3 11.8" stroke="#dcdcdc" stroke-width="0.8" opacity=".75"/></svg>
<div style="left:1342.2px;top:379.5px;width:13.4px;height:344px;border-radius:6.7px;background:linear-gradient(90deg,#626262,#6a6a6a 60%,#707070);border:1px solid #5c5c5c;"></div>
<div style="left:1342.2px;top:435px;width:13.4px;height:288.5px;border-radius:6.7px;background:linear-gradient(90deg,#7e858a,#959ca1 50%,#8b9196);border:1px solid #5c6064;"></div>
<div style="left:1117px;top:329px;width:195px;height:304px;background:linear-gradient(rgba(106,106,106,.93),rgba(92,92,92,.93) 48%,rgba(76,76,76,.93) 64%,rgba(62,62,62,.94));box-shadow:0 2px 10px 2px rgba(0,0,0,.5);border-radius:0 4px 3px 3px;"></div>
<div style="left:1126.7px;top:340.4px;width:156px;height:156px;border-radius:50%;background:radial-gradient(circle closest-side,rgba(226,232,232,1) 0,rgba(228,232,232,.86) 12%,rgba(230,230,230,.5) 45%,rgba(230,230,230,.18) 75%,rgba(230,230,230,0) 100%),conic-gradient(from 0deg,#14e6e6,#1414e6 16.67%,#e614e6 33.33%,#e61414 50%,#e6e614 66.67%,#14e614 83.33%,#14e6e6);box-shadow:0 0 0 1px rgba(62,62,62,.9);"></div>
<div style="left:1290px;top:340px;width:13px;height:157px;border-radius:6.5px;background:linear-gradient(#fff,#f4f4f4 6%,#111 94%,#000);border:1px solid #2e2e2e;"></div>
<div style="left:1292.5px;top:352.2px;width:7px;height:7px;border-radius:50%;border:1.6px solid #111;background:#fff;"></div>
<div style="left:1195.2px;top:419.2px;width:7px;height:7px;border-radius:50%;border:1.6px solid #111;background:#fff;"></div>
<svg style="left:1199px;top:423px;" width="13" height="20" viewBox="0 0 13 20"><path d="M0.7 0.8V15.6L4.2 12.4L6.6 18.2L9 17.2L6.6 11.6H11.4Z" fill="#fff" stroke="#111" stroke-width="1.1" stroke-linejoin="round"/></svg>
<div style="left:1126.5px;top:507.5px;width:176.5px;height:21.5px;border-radius:4px;background:linear-gradient(#5f5f5f,#4e4e4e);border:1px solid #3c3c3c;box-shadow:0 1px 0 rgba(255,255,255,.08);overflow:hidden;"><div style="left:-1px;top:-1px;width:58.5px;height:21.5px;background:linear-gradient(#5b7db8,#7595cc);border:1px solid #34435c;border-radius:4px 0 0 4px;"></div><div style="left:116px;top:0;width:1px;height:21px;background:#3a3a3a"></div></div>
<svg class="t" style="left:1131px;top:510px" width="30" height="16"><text x="3 10 18" y="12" font-size="11" fill="#000">RGB</text></svg>
<svg class="t" style="left:1189px;top:510px" width="29" height="16"><text x="3 11 17" y="12" font-size="11" fill="#fff">HSV</text></svg>
<svg class="t" style="left:1248px;top:510px" width="28" height="16"><text x="3 11 17" y="12" font-size="11" fill="#fff">Hex</text></svg>
<div style="left:1126px;top:538.8px;width:145.5px;height:63.2px;border-radius:9px;background:linear-gradient(#4e4e4e,#3e3e3e 33%,#4e4e4e 33.4%,#3e3e3e 66.6%,#4e4e4e 67%,#3e3e3e);border:1px solid #383838;box-shadow:0 1px 0 rgba(255,255,255,.08);overflow:hidden;"><div style="left:0;top:0px;width:113.8px;height:20.5px;background:linear-gradient(#9e9e9e,#878787);"></div><div style="left:0;top:20.5px;width:111.0px;height:21px;background:linear-gradient(#9e9e9e,#878787);"></div><div style="left:0;top:41.5px;width:93.6px;height:21px;background:linear-gradient(#9e9e9e,#878787);"></div><div style="left:0;top:20px;width:146px;height:1px;background:#363636"></div><div style="left:0;top:41px;width:146px;height:1px;background:#363636"></div></div>
<div style="left:1126px;top:602px;width:145.5px;height:21px;border-radius:10px;background:linear-gradient(#9e9e9e,#858585);border:1px solid #383838;box-shadow:0 1px 0 rgba(255,255,255,.08);"></div>
<svg class="t" style="left:1138px;top:542px" width="18" height="16"><text x="3 10" y="12" font-size="11" fill="#fff">R:</text></svg>
<svg class="t" style="left:1221px;top:542px" width="39" height="16"><text x="3 10 13 20 27" y="12" font-size="11" fill="#fff">0.784</text></svg>
<svg class="t" style="left:1139px;top:563px" width="19" height="16"><text x="3 11" y="12" font-size="11" fill="#fff">G:</text></svg>
<svg class="t" style="left:1220px;top:563px" width="39" height="16"><text x="3 10 13 20 27" y="12" font-size="11" fill="#fff">0.759</text></svg>
<svg class="t" style="left:1139px;top:584px" width="18" height="16"><text x="3 10" y="12" font-size="11" fill="#fff">B:</text></svg>
<svg class="t" style="left:1220px;top:584px" width="39" height="16"><text x="3 10 13 20 27" y="12" font-size="11" fill="#fff">0.633</text></svg>
<svg class="t" style="left:1138px;top:605px" width="18" height="16"><text x="3 10" y="12" font-size="11" fill="#fff">A:</text></svg>
<svg class="t" style="left:1221px;top:605px" width="39" height="16"><text x="3 10 13 20 27" y="12" font-size="11" fill="#fff">1.000</text></svg>
<div style="left:1282px;top:539px;width:21px;height:21.5px;border-radius:4px;background:linear-gradient(#a0a0a0,#888);border:1px solid #4a4a4a;box-shadow:0 1px 0 rgba(255,255,255,.1);"></div>
<svg style="left:1284.5px;top:541.5px;" width="17" height="17" viewBox="0 0 17 17"><path d="M2 15L3 11.8L9.4 5.4L11.6 7.6L5.2 14Z" fill="#e8e8e8" stroke="#111" stroke-width="1"/><path d="M8.6 4.4L12.6 8.4" stroke="#111" stroke-width="2.4" stroke-linecap="round"/><path d="M10.6 6.4L13.4 3.6" stroke="#111" stroke-width="3.8" stroke-linecap="round"/><circle cx="13.6" cy="3.4" r="2.4" fill="#111"/></svg>
</div></body></html>
